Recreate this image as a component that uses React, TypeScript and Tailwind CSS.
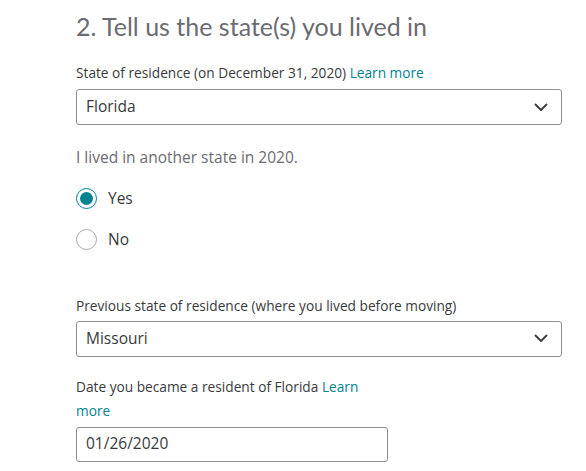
import React from "react";

function Chevron() {
  return (
    <svg width="14" height="9" viewBox="0 0 14 9" fill="none">
      <path d="M1.5 1.5 L7 7 L12.5 1.5" stroke="#393a3d" strokeWidth="1.8" strokeLinecap="round" strokeLinejoin="round" />
    </svg>
  );
}

function Select({ value }: { value: string }) {
  return (
    <div className="flex h-[36px] w-[486px] items-center justify-between rounded-[3px] border border-[#8d9096] pl-[9px] pr-[13px]">
      <span className="text-[15.5px] text-[#393a3d]">{value}</span>
      <Chevron />
    </div>
  );
}

function Radio({ checked, label }: { checked: boolean; label: string }) {
  return (
    <div className="flex items-center gap-[11px]">
      <div
        className={
          checked
            ? "flex h-[21px] w-[21px] items-center justify-center rounded-full border-[1.5px] border-[#00838f]"
            : "flex h-[21px] w-[21px] items-center justify-center rounded-full border-[1.5px] border-[#a5a7ab]"
        }
      >
        {checked && <div className="h-[13px] w-[13px] rounded-full bg-[#00838f]" />}
      </div>
      <span className="text-[15.5px] text-[#393a3d]">{label}</span>
    </div>
  );
}

export default function App() {
  return (
    <div className="h-[471px] w-[586px] overflow-hidden bg-white pl-[76px] pt-[10px]" style={{ fontFamily: "'Open Sans', 'Noto Sans', sans-serif" }}>
      <h2 className="text-[25px] leading-[32px] text-[#6b6c72]" style={{ fontFamily: "Lato, sans-serif" }}>
        2. Tell us the state(s) you lived in
      </h2>
      <div className="mt-[23px] text-[13.7px] leading-[16px] text-[#393a3d]">
        State of residence (on December 31, 2020) <span className="text-[#00838f]">Learn more</span>
      </div>
      <div className="mt-[8px]">
        <Select value="Florida" />
      </div>
      <div className="mt-[22px] text-[15.5px] leading-[20px] text-[#6b6c72]">I lived in another state in 2020.</div>
      <div className="mt-[20px] flex flex-col gap-[18px]">
        <Radio checked label="Yes" />
        <Radio checked={false} label="No" />
      </div>
      <div className="mt-[46px] text-[13.7px] leading-[16px] text-[#393a3d]">
        Previous state of residence (where you lived before moving)
      </div>
      <div className="mt-[7px]">
        <Select value="Missouri" />
      </div>
      <div className="mt-[18px] text-[13.7px] leading-[24px] text-[#393a3d]">
        <div>
          Date you became a resident of Florida <span className="text-[#00838f]">Learn</span>
        </div>
        <div className="text-[#00838f]">more</div>
      </div>
      <div className="mt-[4px] flex h-[35px] w-[312px] items-center rounded-[3px] border border-[#8d9096] pl-[9px]">
        <span className="text-[15.5px] text-[#393a3d]">01/26/2020</span>
      </div>
    </div>
  );
}
